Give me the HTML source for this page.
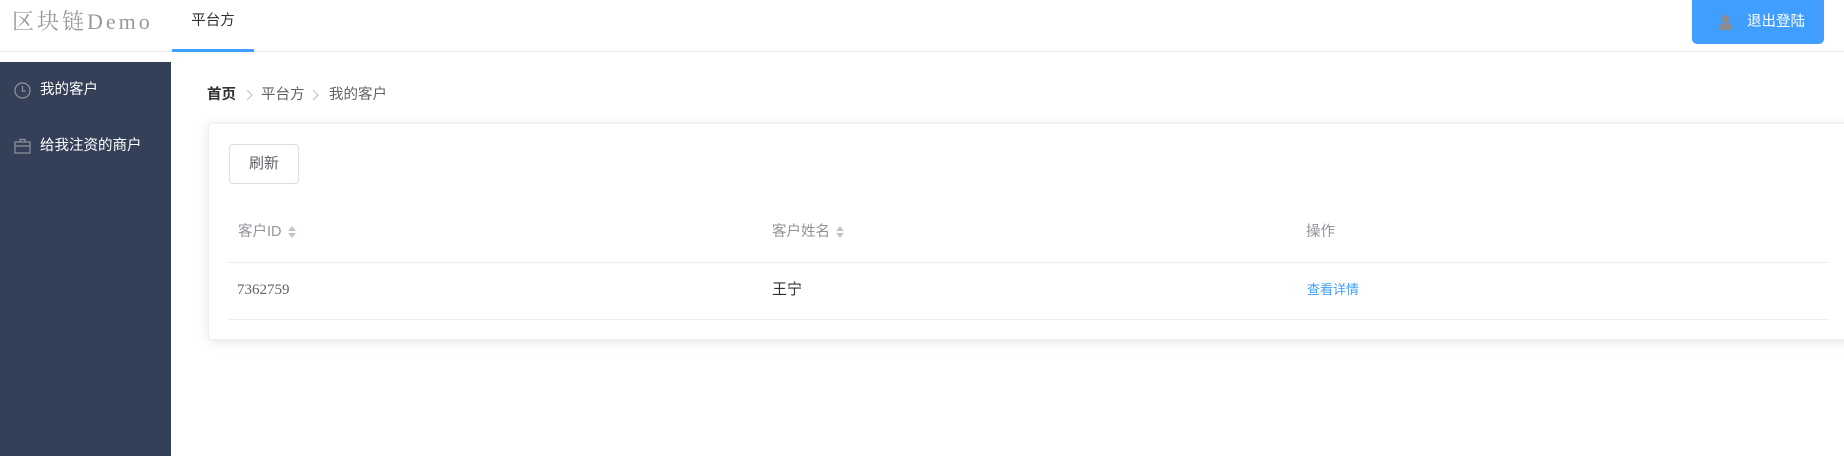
<!DOCTYPE html>
<html><head><meta charset="utf-8"><style>
*{margin:0;padding:0;box-sizing:border-box}
body{width:1844px;height:456px;overflow:hidden;background:#fff;font-family:"Liberation Sans","Noto Sans CJK SC",sans-serif;position:relative}
.abs{position:absolute}
.hdr{left:0;top:0;width:1844px;height:52px;border-bottom:1px solid #e6e6e6}
.logo{left:12px;top:8px;font-family:"Liberation Serif","Noto Serif CJK SC",serif;font-size:22px;color:#999;letter-spacing:3px;line-height:28px}
.tab{left:172px;top:0;width:82px;height:52px;border-bottom:3px solid #409eff;text-align:center;line-height:42px;font-size:14.5px;color:#303133}
.btn{left:1692px;top:0;width:132px;height:44px;background:#409eff;border-radius:0 0 5px 5px;color:#fff;font-size:14.5px;line-height:44px}
.side{left:0;top:62px;width:171px;height:394px;background:#344058}
.mi{left:40px;color:#fff;font-size:14.5px;line-height:20px}
.bc{top:84px;font-size:14.5px;line-height:22px;color:#606266}
.card{left:208px;top:123px;width:1660px;height:217px;border:1px solid #ebeef5;border-radius:4px;box-shadow:0 2px 12px rgba(0,0,0,.1);background:#fff}
.rb{left:229px;top:144px;width:70px;height:40px;border:1px solid #dcdfe6;border-radius:4px;text-align:center;line-height:38px;font-size:15px;color:#606266}
.th{top:222px;font-size:14.5px;color:#909399;line-height:20px}
.td{top:280px;font-size:15px;color:#606266;line-height:20px}
.line{left:228px;width:1601px;height:1px;background:#ebeef5}
.sort{display:inline-block;vertical-align:middle;margin-left:6px;width:8px;height:12px;position:relative}
.sort:before{content:"";position:absolute;left:0;top:0;border:4px solid transparent;border-bottom:5px solid #c0c4cc;border-top:0}
.sort:after{content:"";position:absolute;left:0;top:7px;border:4px solid transparent;border-top:5px solid #c0c4cc;border-bottom:0}
</style></head><body>
<div class="abs hdr"></div>
<div class="abs logo">区块链Demo</div>
<div class="abs tab">平台方</div>
<div class="abs btn"><svg class="abs" style="left:26px;top:15px" width="15" height="15" viewBox="0 0 15 15"><circle cx="7.5" cy="4" r="3.8" fill="#8c8c8c"/><path d="M1 15v-3c0-2 2-4 4-4h5c2 0 4 2 4 4v3z" fill="#8c8c8c"/></svg><span class="abs" style="left:55px;top:0">退出登陆</span></div>
<div class="abs side"></div>
<svg class="abs" style="left:14px;top:82px" width="17" height="17" viewBox="0 0 17 17"><circle cx="8.5" cy="8.5" r="7.5" fill="none" stroke="#909399" stroke-width="1.2"/><path d="M8.5 4v5h3" fill="none" stroke="#909399" stroke-width="1.2"/></svg>
<div class="abs mi" style="top:80px">我的客户</div>
<svg class="abs" style="left:14px;top:138px" width="17" height="16" viewBox="0 0 17 16"><rect x="1" y="4" width="15" height="11" fill="none" stroke="#909399" stroke-width="1.2"/><path d="M6 4V1.5h5V4M1 8h15" fill="none" stroke="#909399" stroke-width="1.2"/></svg>
<div class="abs mi" style="top:136px">给我注资的商户</div>
<div class="abs bc" style="left:207px;color:#303133;font-weight:bold">首页</div>
<svg class="abs" style="left:245px;top:89px" width="8" height="12" viewBox="0 0 8 12"><path d="M2 1l5 5-5 5" fill="none" stroke="#c0c4cc" stroke-width="1.2"/></svg>
<div class="abs bc" style="left:261px">平台方</div>
<svg class="abs" style="left:311px;top:89px" width="8" height="12" viewBox="0 0 8 12"><path d="M2 1l5 5-5 5" fill="none" stroke="#c0c4cc" stroke-width="1.2"/></svg>
<div class="abs bc" style="left:329px">我的客户</div>
<div class="abs card"></div>
<div class="abs rb">刷新</div>
<div class="abs th" style="left:238px">客户ID<span class="sort"></span></div>
<div class="abs th" style="left:772px">客户姓名<span class="sort"></span></div>
<div class="abs th" style="left:1306px">操作</div>
<div class="abs line" style="top:262px"></div>
<div class="abs td" style="left:237px;font-family:'Liberation Serif',serif">7362759</div>
<div class="abs td" style="left:772px;color:#303133">王宁</div>
<div class="abs td" style="left:1307px;color:#409eff;font-size:13px">查看详情</div>
<div class="abs line" style="top:319px"></div>
</body></html>
